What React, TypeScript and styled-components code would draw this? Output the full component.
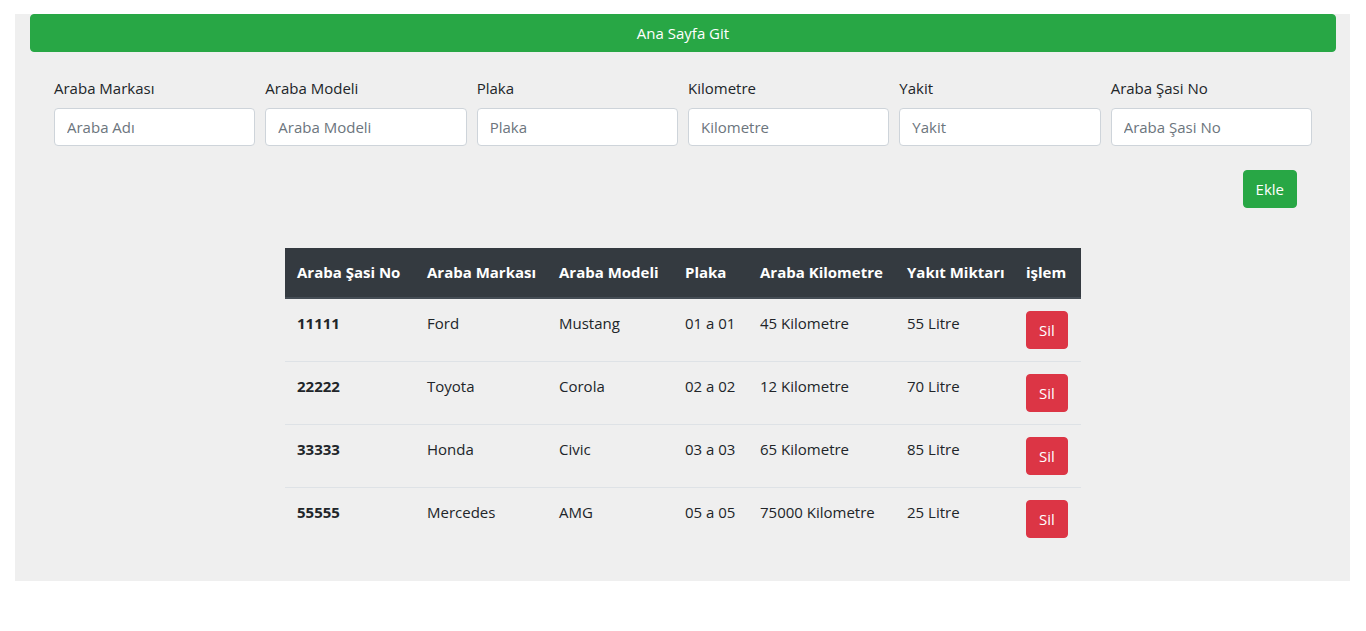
import React from "react";
import styled, { createGlobalStyle } from "styled-components";

const Global = createGlobalStyle`
  html, body { margin: 0; padding: 0; background: #ffffff; }
  body {
    font-family: "Open Sans", "Noto Sans", "Liberation Sans", sans-serif;
    font-size: 15px;
    color: #212529;
  }
  * { box-sizing: border-box; }
`;

const Page = styled.div`
  padding: 14px 16px 50px 15px;
`;

const Panel = styled.div`
  background: #efefef;
  padding: 0 14px 31px 15px;
`;

const HomeButton = styled.button`
  display: block;
  width: 100%;
  height: 38px;
  border: 1px solid #28a745;
  border-radius: 4px;
  background: #28a745;
  color: #ffffff;
  font-family: inherit;
  font-size: 15px;
  line-height: 24px;
  cursor: pointer;
`;

const Form = styled.div`
  padding: 24px 19px 0 19px;
`;

const FieldRow = styled.div`
  display: grid;
  grid-template-columns: repeat(6, 1fr);
`;

const Field = styled.div`
  padding: 0 5px;
  margin-bottom: 16px;
  display: flex;
  flex-direction: column;
`;

const Label = styled.label`
  display: block;
  line-height: 24px;
  margin-bottom: 8px;
  color: #212529;
`;

const Input = styled.input`
  width: 100%;
  height: 38px;
  padding: 6px 12px;
  border: 1px solid #ced4da;
  border-radius: 4px;
  background: #ffffff;
  font-family: inherit;
  font-size: 15px;
  color: #495057;
  &::placeholder { color: #6c757d; }
`;

const Actions = styled.div`
  display: flex;
  justify-content: flex-end;
  padding: 8px 20px 0 0;
`;

const ActionButton = styled.button<{ $tone: "green" | "red" }>`
  height: 38px;
  padding: 6px 12px;
  border-radius: 4px;
  border: 1px solid ${(p) => (p.$tone === "green" ? "#28a745" : "#dc3545")};
  background: ${(p) => (p.$tone === "green" ? "#28a745" : "#dc3545")};
  color: #ffffff;
  font-family: inherit;
  font-size: 15px;
  line-height: 24px;
  cursor: pointer;
`;

const TableWrap = styled.div`
  display: flex;
  justify-content: center;
  padding-top: 40px;
`;

const Table = styled.table`
  width: 796px;
  table-layout: fixed;
  border-collapse: collapse;
`;

const Th = styled.th`
  background: #343a40;
  color: #ffffff;
  font-weight: 700;
  text-align: left;
  padding: 12px 0 13px 12px;
  line-height: 24px;
  border-bottom: 2px solid #454d55;
  white-space: nowrap;
`;

const Td = styled.td<{ $bold?: boolean }>`
  padding: 12px 0 12px 12px;
  line-height: 24px;
  vertical-align: top;
  border-top: 1px solid #dee2e6;
  font-weight: ${(p) => (p.$bold ? 700 : 400)};
  white-space: nowrap;
`;

const FirstRow = styled.tr`
  & > td { border-top: none; }
`;

const fields = [
  ["Araba Markası", "Araba Adı"],
  ["Araba Modeli", "Araba Modeli"],
  ["Plaka", "Plaka"],
  ["Kilometre", "Kilometre"],
  ["Yakit", "Yakit"],
  ["Araba Şasi No", "Araba Şasi No"],
];

const cols = [130, 132, 126, 75, 147, 119, 67];
const heads = [
  "Araba Şasi No",
  "Araba Markası",
  "Araba Modeli",
  "Plaka",
  "Araba Kilometre",
  "Yakıt Miktarı",
  "işlem",
];

const cars = [
  ["11111", "Ford", "Mustang", "01 a 01", "45 Kilometre", "55 Litre"],
  ["22222", "Toyota", "Corola", "02 a 02", "12 Kilometre", "70 Litre"],
  ["33333", "Honda", "Civic", "03 a 03", "65 Kilometre", "85 Litre"],
  ["55555", "Mercedes", "AMG", "05 a 05", "75000 Kilometre", "25 Litre"],
];

function CarRow({ car }: { car: string[] }) {
  return (
    <>
      <Td $bold>{car[0]}</Td>
      {car.slice(1).map((c, i) => (
        <Td key={i}>{c}</Td>
      ))}
      <Td>
        <ActionButton $tone="red">Sil</ActionButton>
      </Td>
    </>
  );
}

export default function App() {
  return (
    <>
      <Global />
      <Page>
        <Panel>
          <HomeButton>Ana Sayfa Git</HomeButton>
          <Form>
            <FieldRow>
              {fields.map(([l, p]) => (
                <Field key={l + p}>
                  <Label>{l}</Label>
                  <Input placeholder={p} />
                </Field>
              ))}
            </FieldRow>
            <Actions>
              <ActionButton $tone="green">Ekle</ActionButton>
            </Actions>
          </Form>
          <TableWrap>
            <Table>
              <colgroup>
                {cols.map((w, i) => (
                  <col key={i} style={{ width: w }} />
                ))}
              </colgroup>
              <thead>
                <tr>
                  {heads.map((h) => (
                    <Th key={h}>{h}</Th>
                  ))}
                </tr>
              </thead>
              <tbody>
                {cars.map((car, i) =>
                  i === 0 ? (
                    <FirstRow key={car[0]}>
                      <CarRow car={car} />
                    </FirstRow>
                  ) : (
                    <tr key={car[0]}>
                      <CarRow car={car} />
                    </tr>
                  )
                )}
              </tbody>
            </Table>
          </TableWrap>
        </Panel>
      </Page>
    </>
  );
}
